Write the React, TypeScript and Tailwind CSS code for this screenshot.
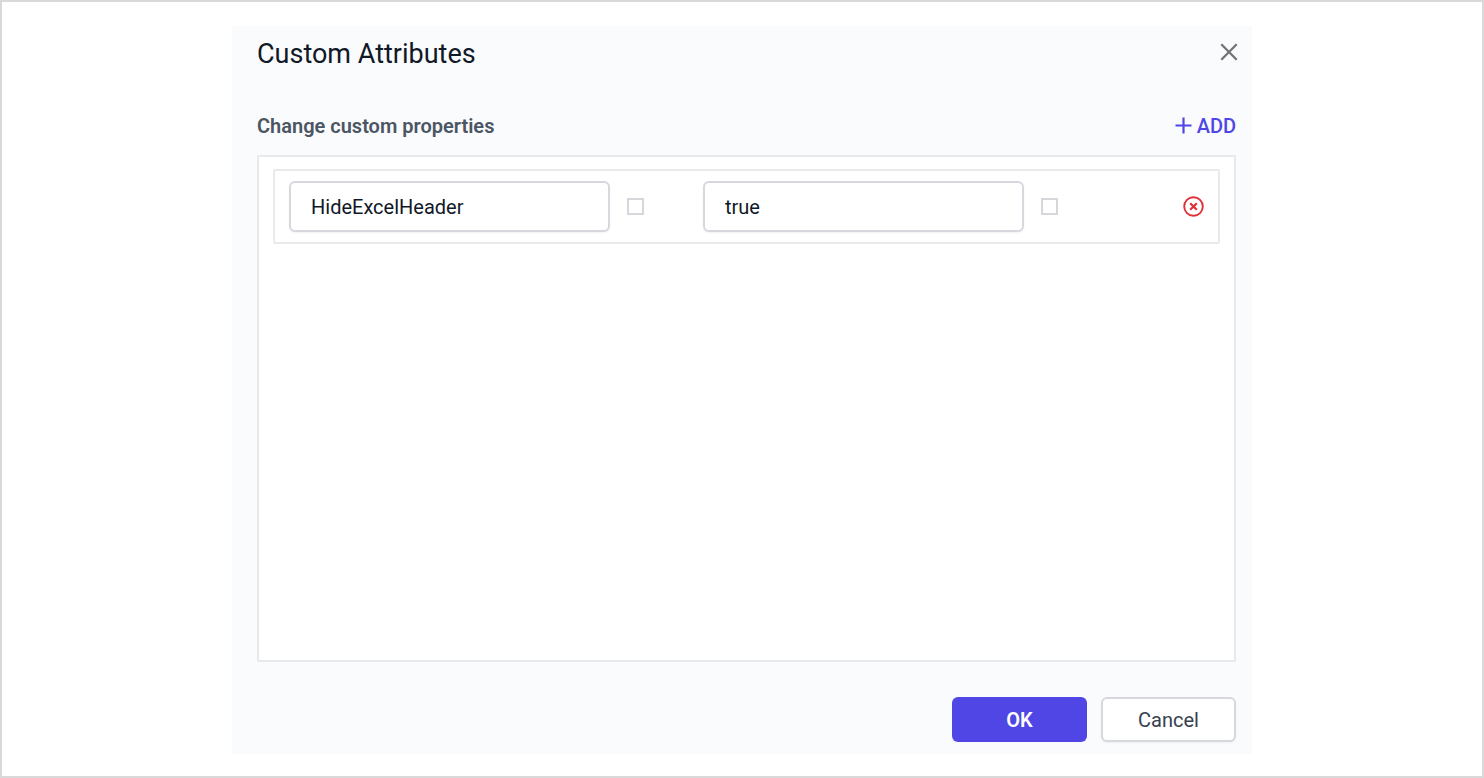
import { useState } from "react";

const initialRows = [{ id: 1, name: "HideExcelHeader", value: "true" }];

const fieldClass =
    "h-[51px] min-w-0 w-[321px] rounded-md border-2 border-[#d6d8dd] bg-white px-5 text-xl text-[#111827] shadow-xs outline-none focus:border-[#4f46e5]";

const checkClass =
    "size-[17px] shrink-0 appearance-none border-2 border-[#d6d7da] bg-white checked:bg-[#4f46e5]";

export default function App() {
    const [rows, setRows] = useState(initialRows);

    const addRow = () => setRows([...rows, { id: Date.now(), name: "", value: "" }]);
    const removeRow = (id: number) => setRows(rows.filter((row) => row.id !== id));
    const updateRow = (id: number, key: "name" | "value", text: string) =>
        setRows(rows.map((row) => (row.id === id ? { ...row, [key]: text } : row)));

    return (
        <div className="flex min-h-screen items-start justify-center border-2 border-[#d9d9d9] bg-white pt-6 pb-4 font-['Roboto',sans-serif]">
            <div role="dialog" aria-labelledby="dialog-title" className="w-full max-w-[1020px] bg-[#fafbfd] pt-2 pb-3">
                {/* Title bar */}
                <div className="flex items-center justify-between pr-[14px] pl-[25px]">
                    <h1 id="dialog-title" className="text-[27px] leading-10 text-[#111827]">
                        Custom Attributes
                    </h1>
                    <button aria-label="Close" className="pb-1">
                        <svg width="18" height="18" viewBox="0 0 18 18" fill="none" stroke="#707477" strokeWidth="2.3">
                            <path d="M1.3 1.3 16.7 16.7M16.7 1.3 1.3 16.7" />
                        </svg>
                    </button>
                </div>

                <div className="pr-4 pl-[25px]">
                    {/* Properties header */}
                    <div className="mt-8 flex items-center justify-between">
                        <h2 className="text-xl leading-10 font-semibold text-[#4b5563]">Change custom properties</h2>
                        <button onClick={addRow} className="flex items-center gap-1 text-xl leading-10 font-medium text-[#4f46e5]">
                            <svg width="18" height="18" viewBox="0 0 18 18" fill="none" stroke="currentColor" strokeWidth="2.2">
                                <path d="M8.5 0.5v16M0.5 8.5h16" />
                            </svg>
                            ADD
                        </button>
                    </div>

                    <div className="mt-[9px] h-[507px] overflow-y-auto rounded-xs border-2 border-[#e7e9ec] bg-white px-[14px] py-3">
                        {rows.map((row) => (
                            <div key={row.id} className="flex items-center rounded-xs border-2 border-[#e9eaec] px-[14px] py-[10px]">
                                <div className="flex w-[414px] items-center gap-[17px]">
                                    <input
                                        aria-label="Attribute name"
                                        value={row.name}
                                        onChange={(e) => updateRow(row.id, "name", e.target.value)}
                                        className={fieldClass}
                                    />
                                    <input type="checkbox" aria-label="Name option" className={checkClass} />
                                </div>
                                <div className="flex items-center gap-[17px]">
                                    <input
                                        aria-label="Attribute value"
                                        value={row.value}
                                        onChange={(e) => updateRow(row.id, "value", e.target.value)}
                                        className={fieldClass}
                                    />
                                    <input type="checkbox" aria-label="Value option" className={checkClass} />
                                </div>
                                <button aria-label="Remove attribute" onClick={() => removeRow(row.id)} className="ml-auto">
                                    <svg width="22" height="22" viewBox="0 0 22 22" fill="none" stroke="#dc3238">
                                        <circle cx="11.5" cy="10.5" r="9.3" strokeWidth="1.9" />
                                        <path d="M8.2 7.2 14.8 13.8M14.8 7.2 8.2 13.8" strokeWidth="2.2" />
                                    </svg>
                                </button>
                            </div>
                        ))}
                    </div>

                    {/* Footer */}
                    <div className="mt-[35px] flex justify-end gap-[14px]">
                        <button className="h-[45px] w-[135px] rounded-md bg-[#4f46e5] text-xl font-semibold text-white">OK</button>
                        <button className="h-[45px] w-[135px] rounded-md border-2 border-[#d6d8dd] bg-white text-xl text-[#374151] shadow-xs">
                            Cancel
                        </button>
                    </div>
                </div>
            </div>
        </div>
    );
}
